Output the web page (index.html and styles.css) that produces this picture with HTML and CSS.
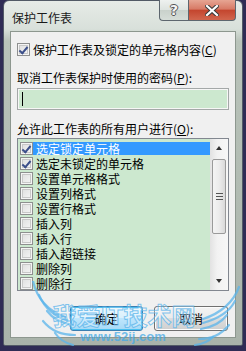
FILE: index.html
```html
<!DOCTYPE html>
<html lang="zh-CN">
<head>
<meta charset="utf-8">
<title>保护工作表</title>
<link rel="stylesheet" href="styles.css">
</head>
<body>
<div class="window">
  <div class="titlebar">
    <span class="title">保护工作表</span>
    <div class="caption-buttons">
      <span class="cap help">?</span>
      <span class="cap close">
        <svg width="14" height="11" viewBox="0 0 14 11"><path d="M2 1 L12 10 M12 1 L2 10" stroke="#3a3a3a" stroke-width="4.2" stroke-linecap="square"/><path d="M2 1 L12 10 M12 1 L2 10" stroke="#fff" stroke-width="2.2" stroke-linecap="square"/></svg>
      </span>
    </div>
  </div>
  <div class="client">
    <label class="row first">
      <span class="cb checked"></span>
      <span>保护工作表及锁定的单元格内容(<u>C</u>)</span>
    </label>
    <div class="label lbl-pass">取消工作表保护时使用的密码(<u>P</u>):</div>
    <div class="input"><span class="caret"></span></div>
    <div class="label lbl-allow">允许此工作表的所有用户进行(<u>O</u>):</div>
    <div class="list">
      <div class="items">
        <div class="item"><span class="cb checked"></span><span class="txt sel">选定锁定单元格</span></div>
        <div class="item"><span class="cb checked"></span><span class="txt">选定未锁定的单元格</span></div>
        <div class="item"><span class="cb"></span><span class="txt">设置单元格格式</span></div>
        <div class="item"><span class="cb"></span><span class="txt">设置列格式</span></div>
        <div class="item"><span class="cb"></span><span class="txt">设置行格式</span></div>
        <div class="item"><span class="cb"></span><span class="txt">插入列</span></div>
        <div class="item"><span class="cb"></span><span class="txt">插入行</span></div>
        <div class="item"><span class="cb"></span><span class="txt">插入超链接</span></div>
        <div class="item"><span class="cb"></span><span class="txt">删除列</span></div>
        <div class="item"><span class="cb"></span><span class="txt">删除行</span></div>
      </div>
      <div class="scrollbar">
        <div class="arrow up"></div>
        <div class="thumb"><span class="grip"></span></div>
        <div class="track"></div>
        <div class="arrow down"></div>
      </div>
    </div>
    <div class="buttons">
      <button class="btn default">确定</button>
      <button class="btn">取消</button>
    </div>
  </div>
  <svg class="wings" width="240" height="70" viewBox="0 0 240 70">
    <g fill="none" stroke="rgba(90,180,235,0.75)" stroke-width="2.2" stroke-linecap="round">
      <path d="M30 0 C34 18 46 30 62 36"/>
      <path d="M36 14 C42 28 52 36 66 40"/>
      <path d="M44 30 C50 38 58 42 70 44"/>
      <path d="M40 40 C48 50 58 54 72 54"/>
      <path d="M52 52 C56 58 62 62 70 64"/>
      <path d="M236 6 C230 22 218 32 200 38"/>
      <path d="M232 20 C226 32 214 38 200 42"/>
      <path d="M224 34 C218 42 210 46 198 48"/>
      <path d="M226 44 C218 54 208 58 196 58"/>
      <path d="M210 56 C206 60 200 63 192 64"/>
    </g>
  </svg>
  <div class="watermark">
    <div class="wm-big">我爱IT技术网</div>
    <div class="wm-small">www.52ij.com</div>
  </div>
</div>
</body>
</html>
```
FILE: styles.css
```css
html, body {
  margin: 0;
  padding: 0;
}
body {
  width: 246px;
  height: 351px;
  overflow: hidden;
  background: #2f2c55;
  font-family: "Noto Sans CJK SC", "Microsoft YaHei", sans-serif;
  font-size: 12px;
  color: #000;
}
.window {
  position: relative;
  box-sizing: border-box;
  width: 240px;
  height: 346px;
  margin-left: 3px;
  border: 1px solid #525a66;
  border-radius: 6px 6px 2px 2px;
  background: linear-gradient(180deg, #e6ebe7 0px, #d8e0da 28px, #b9c3ba 40px, #a9b3aa 100%);
  padding: 0 6px 7px 6px;
  display: flex;
  flex-direction: column;
}
.titlebar {
  height: 30px;
  display: flex;
  justify-content: space-between;
  align-items: flex-start;
}
.title {
  margin-top: 9px;
  margin-left: 2px;
  line-height: 16px;
  font-size: 12px;
  color: #1a1a1a;
}
.caption-buttons {
  display: flex;
  margin-top: -1px;
}
.cap {
  box-sizing: border-box;
  height: 21px;
  border: 1px solid #5d666e;
  border-top: none;
  display: flex;
  align-items: center;
  justify-content: center;
}
.help {
  width: 29px;
  border-radius: 0 0 0 4px;
  border-right: none;
  background: linear-gradient(180deg, #eef1ef 0%, #dde3df 50%, #c9d1cb 51%, #d6ddd8 100%);
  font-family: "DejaVu Sans", sans-serif;
  font-weight: bold;
  font-size: 14px;
  color: #f4f4f4;
  text-shadow: 1px 0 0 #555, -1px 0 0 #555, 0 1px 0 #555, 0 -1px 0 #555;
}
.close {
  width: 48px;
  border-radius: 0 0 4px 0;
  background: linear-gradient(180deg, #e6a593 0%, #d77a66 45%, #c4462f 52%, #d1664e 100%);
}
.client {
  box-sizing: border-box;
  height: 307px;
  border: 1px solid #8d978f;
  background: #f0f0f0;
  padding: 0 6px;
  display: flex;
  flex-direction: column;
}
.row {
  display: flex;
  align-items: center;
  height: 15px;
  line-height: 15px;
  margin-top: 10px;
}
.row .cb {
  margin-right: 3px;
}
.cb {
  box-sizing: border-box;
  width: 13px;
  height: 13px;
  flex: none;
  border: 1px solid #8e8f8f;
  background: linear-gradient(135deg, #dcdcdc 0%, #f7f7f7 100%);
  box-shadow: inset 0 0 0 1px #f4f4f4, inset 0 0 0 2px #c8c8c8;
  position: relative;
}
.cb.checked::after {
  content: "";
  position: absolute;
  left: 3px;
  top: 1px;
  width: 3px;
  height: 7px;
  border-right: 2px solid #3c4f8a;
  border-bottom: 2px solid #3c4f8a;
  transform: rotate(40deg);
}
.label {
  height: 15px;
  line-height: 15px;
  white-space: nowrap;
}
.lbl-pass {
  margin-top: 13px;
}
.input {
  box-sizing: border-box;
  margin-top: 3px;
  height: 22px;
  border: 1px solid #a4a8a8;
  box-shadow: inset 0 0 0 1px #f6f6f6;
  background: #cce8cf;
  display: flex;
  align-items: center;
  padding-left: 4px;
}
.caret {
  width: 1px;
  height: 14px;
  background: #000;
}
.lbl-allow {
  margin-top: 11px;
}
.list {
  box-sizing: border-box;
  margin-top: 2px;
  height: 153px;
  border: 1px solid #828790;
  background: #cce8cf;
  display: flex;
  overflow: hidden;
}
.items {
  flex: 1;
  padding-top: 2px;
}
.item {
  height: 15px;
  display: flex;
  align-items: center;
  padding-left: 2px;
}
.txt {
  flex: 1;
  height: 13px;
  line-height: 13px;
  padding-left: 3px;
  white-space: nowrap;
}
.txt.sel {
  background: #3399ff;
  color: #fff;
}
.scrollbar {
  width: 18px;
  flex: none;
  display: flex;
  flex-direction: column;
  background: linear-gradient(90deg, #e2e2e2 0%, #f2f2f2 40%, #f7f7f7 100%);
}
.arrow {
  height: 18px;
  flex: none;
  display: flex;
  align-items: center;
  justify-content: center;
}
.arrow::before {
  content: "";
  width: 0;
  height: 0;
  border-left: 3.5px solid transparent;
  border-right: 3.5px solid transparent;
}
.arrow.up::before {
  border-bottom: 4px solid #333;
}
.arrow.down::before {
  border-top: 4px solid #333;
}
.thumb {
  box-sizing: border-box;
  height: 75px;
  margin: 2px 2px 0 2px;
  border: 1px solid #9a9a9a;
  border-radius: 2px;
  background: linear-gradient(90deg, #f4f4f4 0%, #ececec 50%, #d9d9d9 100%);
  display: flex;
  align-items: center;
  justify-content: center;
}
.grip {
  width: 7px;
  height: 7px;
  background: linear-gradient(180deg, #555 0 1px, transparent 1px 3px, #555 3px 4px, transparent 4px 6px, #555 6px 7px);
}
.track {
  flex: 1;
}
.buttons {
  margin-top: 15px;
  display: flex;
  justify-content: flex-end;
  gap: 11px;
  padding-right: 1px;
}
.btn {
  box-sizing: border-box;
  width: 74px;
  height: 25px;
  border: 1px solid #707070;
  border-radius: 3px;
  background: linear-gradient(180deg, #f3f3f3 0%, #ebebeb 49%, #dddddd 50%, #cfcfcf 100%);
  box-shadow: inset 0 0 0 1px #fcfcfc;
  font-family: "Noto Sans CJK SC", sans-serif;
  font-size: 12px;
  color: #000;
  padding: 0;
}
.btn.default {
  width: 73px;
  border-color: #3c7fb1;
  background: linear-gradient(180deg, #eaf6fd 0%, #d9f0fc 49%, #bee6fd 50%, #a7d9f5 100%);
  box-shadow: inset 0 0 0 1px #48c0f0;
}
.wings {
  position: absolute;
  left: -1px;
  top: 280px;
  pointer-events: none;
}
.watermark {
  position: absolute;
  left: 0;
  top: 298px;
  width: 100%;
  text-align: center;
  pointer-events: none;
  font-family: "Noto Sans CJK SC", sans-serif;
}
.wm-big {
  font-size: 24px;
  font-weight: bold;
  line-height: 32px;
  color: rgba(255, 255, 255, 0.25);
  -webkit-text-stroke: 1px rgba(90, 180, 235, 0.75);
  margin-left: 2px;
}
.wm-small {
  font-family: "Liberation Sans", sans-serif;
  font-size: 13px;
  line-height: 12px;
  font-weight: bold;
  color: rgba(70, 170, 230, 0.75);
}
```
